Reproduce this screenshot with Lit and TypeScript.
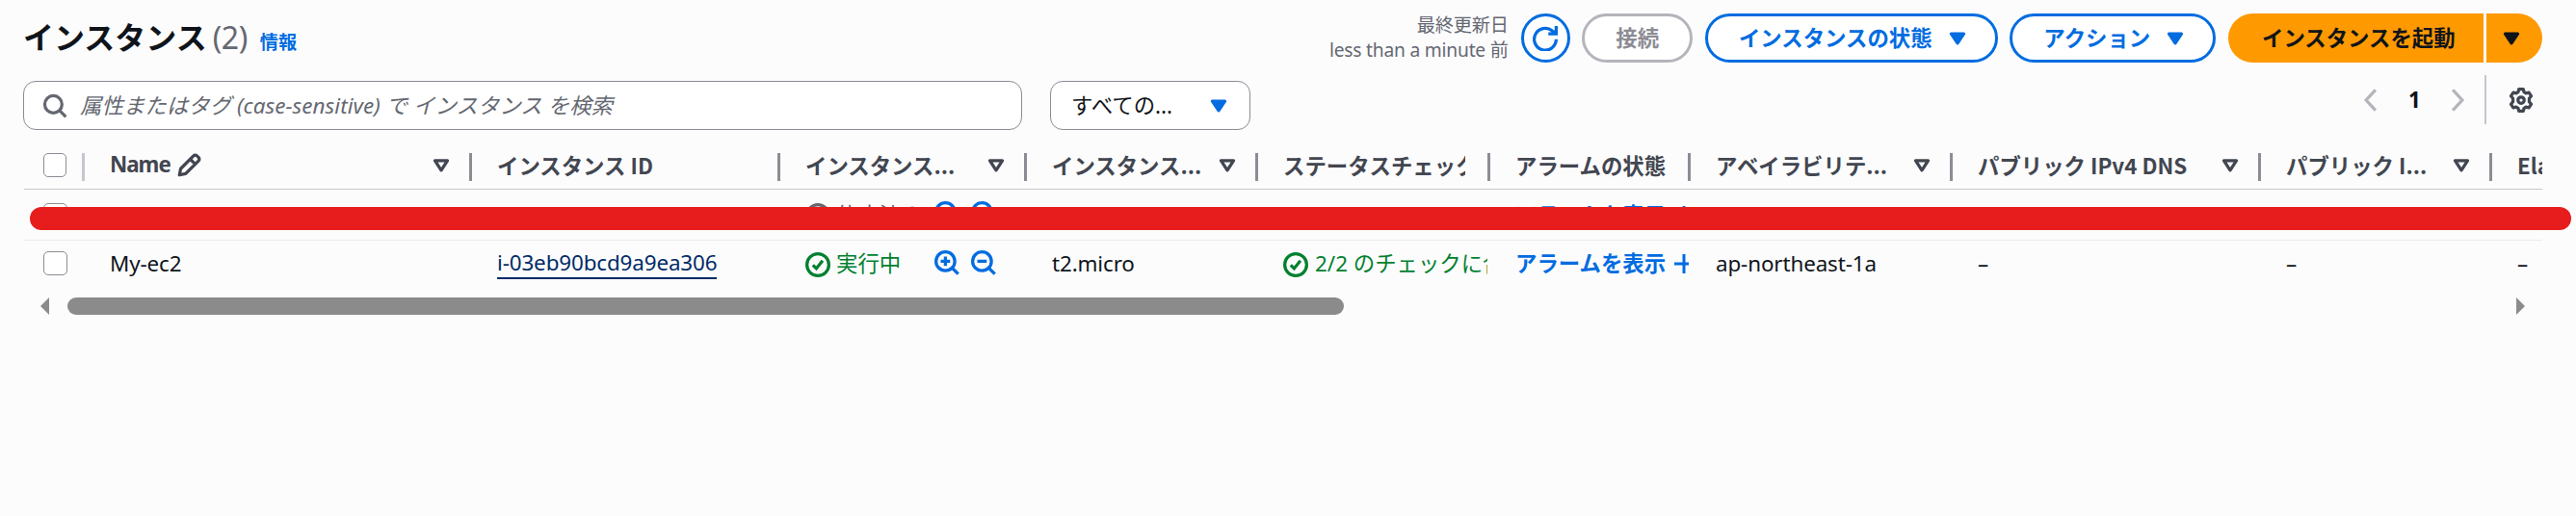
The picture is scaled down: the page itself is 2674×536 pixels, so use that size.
import { LitElement, html, css, svg } from "lit";
import { customElement } from "lit/decorators.js";

const zoomIcon = (minus: boolean) => svg`<svg class="ic" width="26" height="26" viewBox="0 0 16 16" fill="none" stroke="currentColor" stroke-width="2"><circle cx="7" cy="7" r="6"/><path d="m11 11 4.2 4.2M4 7h6"/>${minus ? null : svg`<path d="M7 4v6"/>`}</svg>`;
const okIcon = svg`<svg class="status" width="26" height="26" viewBox="0 0 16 16" fill="none" stroke="currentColor" stroke-width="2"><circle cx="8" cy="8" r="7"/><path d="m4.8 8.2 2.2 2.2 4-5"/></svg>`;
const sortIcon = svg`<svg class="sort" width="26" height="26" viewBox="0 0 16 16" fill="none" stroke="currentColor" stroke-width="2" stroke-linejoin="round"><path d="M4 4.800h8l-4 6.200z"/></svg>`;
const caret = svg`<svg class="ic" width="26" height="26" viewBox="0 0 16 16" fill="currentColor" stroke="currentColor" stroke-width="2" stroke-linejoin="round"><path d="M4 5h8l-4 6z"/></svg>`;

const columns = [
  { label: "Name", edit: true, sort: true },
  { label: "インスタンス ID" },
  { label: "インスタンス...", sort: true },
  { label: "インスタンス...", sort: true },
  { label: "ステータスチェック", clip: true },
  { label: "アラームの状態" },
  { label: "アベイラビリテ...", sort: true },
  { label: "パブリック IPv4 DNS", sort: true },
  { label: "パブリック I...", sort: true },
  { label: "Elastic IP" },
];

@customElement("app-root")
export class AppRoot extends LitElement {
  static styles = css`
    :host { display: block; height: 536px; box-sizing: border-box; padding: 14px 35px 0 24px; background: #fcfcfd; color: #0f141a; overflow: hidden; position: relative;
      font: 22.4px/32px "Noto Sans", "Noto Sans CJK JP", sans-serif; white-space: nowrap; }
    * { box-sizing: border-box; }
    svg { display: block; flex: none; }
    .head { display: flex; align-items: center; height: 51px; gap: 12.8px; }
    .title { display: flex; align-items: baseline; flex: 1; font-size: 32px; font-weight: 700; line-height: 48px; padding-top: 3px; }
    .count { font-weight: 400; color: #656871; margin-left: 6px; letter-spacing: -0.5px; }
    .info { font-size: 19.2px; color: #006ce0; margin-left: 13px; padding-top: 2px; }
    .stamp { font-size: 19.2px; line-height: 26px; color: #656871; text-align: right; letter-spacing: -0.2px; margin-top: -1px; }
    .btn { height: 51px; border: 3px solid #006ce0; border-radius: 26px; background: #fff; color: #006ce0; font-weight: 700; display: flex; align-items: center; padding: 0 32px; gap: 13px; }
    .btn.menu { padding-right: 26px; }
    .btn.round { width: 51px; padding: 0; justify-content: center; }
    .off { color: #8c8c94; border-color: #b4b4bb; }
    .split { display: flex; gap: 3px; }
    .btn.main, .btn.more { background: #ff9900; color: #0f141a; border: 0; }
    .btn.main { width: 265px; padding: 0 0 0 35px; border-radius: 26px 0 0 26px; }
    .btn.more { width: 58px; padding: 0 0 0 13px; border-radius: 0 26px 26px 0; }
    .tools { display: flex; height: 51px; margin-top: 19px; }
    .search, .select { border: 1.4px solid #8c8c94; border-radius: 13px; background: #fff; display: flex; align-items: center; }
    .search { width: 1037px; padding-left: 19px; gap: 13px; color: #656871; font-style: italic; letter-spacing: 0.06px; }
    .select { width: 208px; margin-left: 29px; padding: 0 19px 0 21px; justify-content: space-between; }
    .select svg { color: #006ce0; }
    .pager { margin: -6px 9px 0 auto; display: flex; align-items: center; height: 51px; color: #b4b4bb; }
    .page { width: 64px; text-align: center; color: #0f141a; font-weight: 700; }
    .rule { width: 1.6px; height: 51px; background: #c6c6cd; margin: 0 23px 0 15px; }
    .gear { color: #424650; }
    .table { overflow: hidden; margin: 10px 0 0 1px; }
    .row { display: grid; grid-template-columns: 63px 402px 320px 256px 240px 241px 208px 272px 320px 240px 240px; }
    .th { height: 52.4px; border-bottom: 1.6px solid #c6c6cd; font-weight: 700; color: #424650; font-family: "Noto Sans CJK JP", sans-serif; }
    .name { font: 700 22.4px/32px "Noto Sans", sans-serif; letter-spacing: -1px; }
    .r1 { height: 52.6px; border-bottom: 1.4px solid #ebebf0; }
    .r2 { height: 48px; }
    .cell { display: flex; align-items: center; padding-left: 26px; position: relative; min-width: 0; overflow: hidden; }
    .th .cell { padding-right: 19px; }
    .th .cell.clip { padding-right: 26px; }
    .th .cell::after { content: ""; position: absolute; right: 0; top: 14px; width: 3px; height: 29px; background: #8c8c94; }
    .th .check::after { background: #c6c6cd; }
    .cell.check { padding-left: 20px; }
    .box { width: 25px; height: 25px; border: 1.6px solid #8c8c94; border-radius: 5px; background: #fff; }
    .th .box { margin-top: 1px; }
    .r2 .box { margin-top: -1px; }
    .lab { overflow: hidden; }
    .sort { margin: 3px 0 0 auto; }
    .pen { margin-left: 6px; margin-top: 2px; }
    .latin { letter-spacing: -0.12px; }
    .id { color: #002b66; border-bottom: 2px solid #002b66; line-height: 30px; }
    .ok { color: #00802f; gap: 6px; }
    .status { margin-top: 2px; }
    .state { padding-top: 1px; }
    .checks { gap: 7px; margin-right: 3px; }
    .zooms { display: flex; gap: 12px; margin: -2px 32px 0 auto; color: #006ce0; }
    .link { color: #006ce0; font-weight: 700; gap: 9px; }
    .r1 .link { padding-top: 1px; }
    .off2 { color: #656871; }
    .bar { display: flex; align-items: center; height: 18px; margin: 11px 18px 0; color: #8b8b8b; }
    .thumb { width: 1325px; height: 18px; border-radius: 9px; background: #8b8b8b; margin-left: 19px; }
    .bar svg:last-child { margin-left: auto; }
    .mark { position: absolute; left: 31px; top: 215px; width: 2638px; height: 24px; border-radius: 12px; background: #e71d1d; }
  `;

  row(stopped: boolean) {
    return html`<div class="row ${stopped ? "r1" : "r2"}">
      <div class="cell check"><div class="box"></div></div>
      <div class="cell latin">${stopped ? "" : "My-ec2"}</div>
      <div class="cell latin">${stopped ? "" : html`<span class="id">i-03eb90bcd9a9ea306</span>`}</div>
      <div class="cell ok ${stopped ? "off2" : ""}">${okIcon}<span class="state">${stopped ? "停止済み" : "実行中"}</span><span class="zooms">${zoomIcon(false)}${zoomIcon(true)}</span></div>
      <div class="cell latin">${stopped ? "" : "t2.micro"}</div>
      <div class="cell ok checks">${stopped ? "" : html`${okIcon}<span>2/2 のチェックに合格しました</span>`}</div>
      <div class="cell link"><span>アラームを表示</span><svg width="15" height="20" fill="none" stroke="currentColor" stroke-width="3"><path d="M0 10h20M10 0v20"/></svg></div>
      <div class="cell latin">${stopped ? "" : "ap-northeast-1a"}</div>
      ${[0, 1, 2].map(() => html`<div class="cell">${stopped ? "" : "–"}</div>`)}
    </div>`;
  }

  render() {
    return html`
      <div class="head">
        <div class="title">インスタンス<span class="count">(2)</span><span class="info">情報</span></div>
        <div class="stamp">最終更新日<br />less than a minute 前</div>
        <div class="btn round"><svg width="26" height="26" viewBox="0 0 16 16" fill="none" stroke="currentColor" stroke-width="2"><path d="M15 8.500a7 7 0 1 1-2.500-5.400L15 5M15 0v5h-5"/></svg></div>
        <div class="btn off">接続</div>
        <div class="btn menu">インスタンスの状態${caret}</div>
        <div class="btn menu">アクション${caret}</div>
        <div class="split"><div class="btn main">インスタンスを起動</div><div class="btn more">${caret}</div></div>
      </div>
      <div class="tools">
        <div class="search"><svg width="26" height="26" viewBox="0 0 16 16" fill="none" stroke="currentColor" stroke-width="2"><circle cx="7" cy="7" r="5.5"/><path d="m11 11 4 4"/></svg>属性またはタグ (case-sensitive) で インスタンス を検索</div>
        <div class="select">すべての...${caret}</div>
        <div class="pager">
          <svg width="26" height="26" viewBox="0 0 16 16" fill="none" stroke="currentColor" stroke-width="2"><path d="m11 1.5-6 6.5 6 6.5"/></svg>
          <span class="page">1</span>
          <svg width="26" height="26" viewBox="0 0 16 16" fill="none" stroke="currentColor" stroke-width="2"><path d="m5 1.5 6 6.5-6 6.5"/></svg>
          <div class="rule"></div>
          <svg class="gear" width="26" height="26" viewBox="0 0 16 16" fill="none" stroke="currentColor" stroke-width="2" stroke-linejoin="round"><path d="M6.600 1h2.800l.5 1.900 1.200.700 1.900-.500 1.500 2.300-1.300 1.500v2.200l1.300 1.500-1.500 2.300-1.900-.500-1.200.700-.5 1.900H6.600l-.5-1.900-1.200-.700-1.900.500-1.500-2.300 1.300-1.500V6.900L1.500 5.400 3 3.100l1.900.500 1.200-.700z"/><circle cx="8" cy="8" r="2"/></svg>
        </div>
      </div>
      <div class="table">
        <div class="row th">
          <div class="cell check"><div class="box"></div></div>
          ${columns.map((c) => html`<div class="cell ${c.clip ? "clip" : ""}"><span class="lab ${c.edit ? "name" : ""}">${c.label}</span>${c.edit ? svg`<svg class="pen" width="26" height="26" viewBox="0 0 16 16" fill="none" stroke="currentColor" stroke-width="2" stroke-linejoin="round"><path d="m2 14 .8-4L11 1.800a1.500 1.500 0 0 1 2.200 0l1 1a1.500 1.500 0 0 1 0 2.200L6 13.200zM9 4l3 3"/></svg>` : ""}${c.sort ? sortIcon : ""}</div>`)}
        </div>
        ${this.row(true)}${this.row(false)}
      </div>
      <div class="bar"><svg width="9" height="18" fill="currentColor"><path d="M9 0v18L0 9z"/></svg><div class="thumb"></div><svg width="9" height="18" fill="currentColor"><path d="M0 0v18l9-9z"/></svg></div>
      <div class="mark"></div>`;
  }
}
